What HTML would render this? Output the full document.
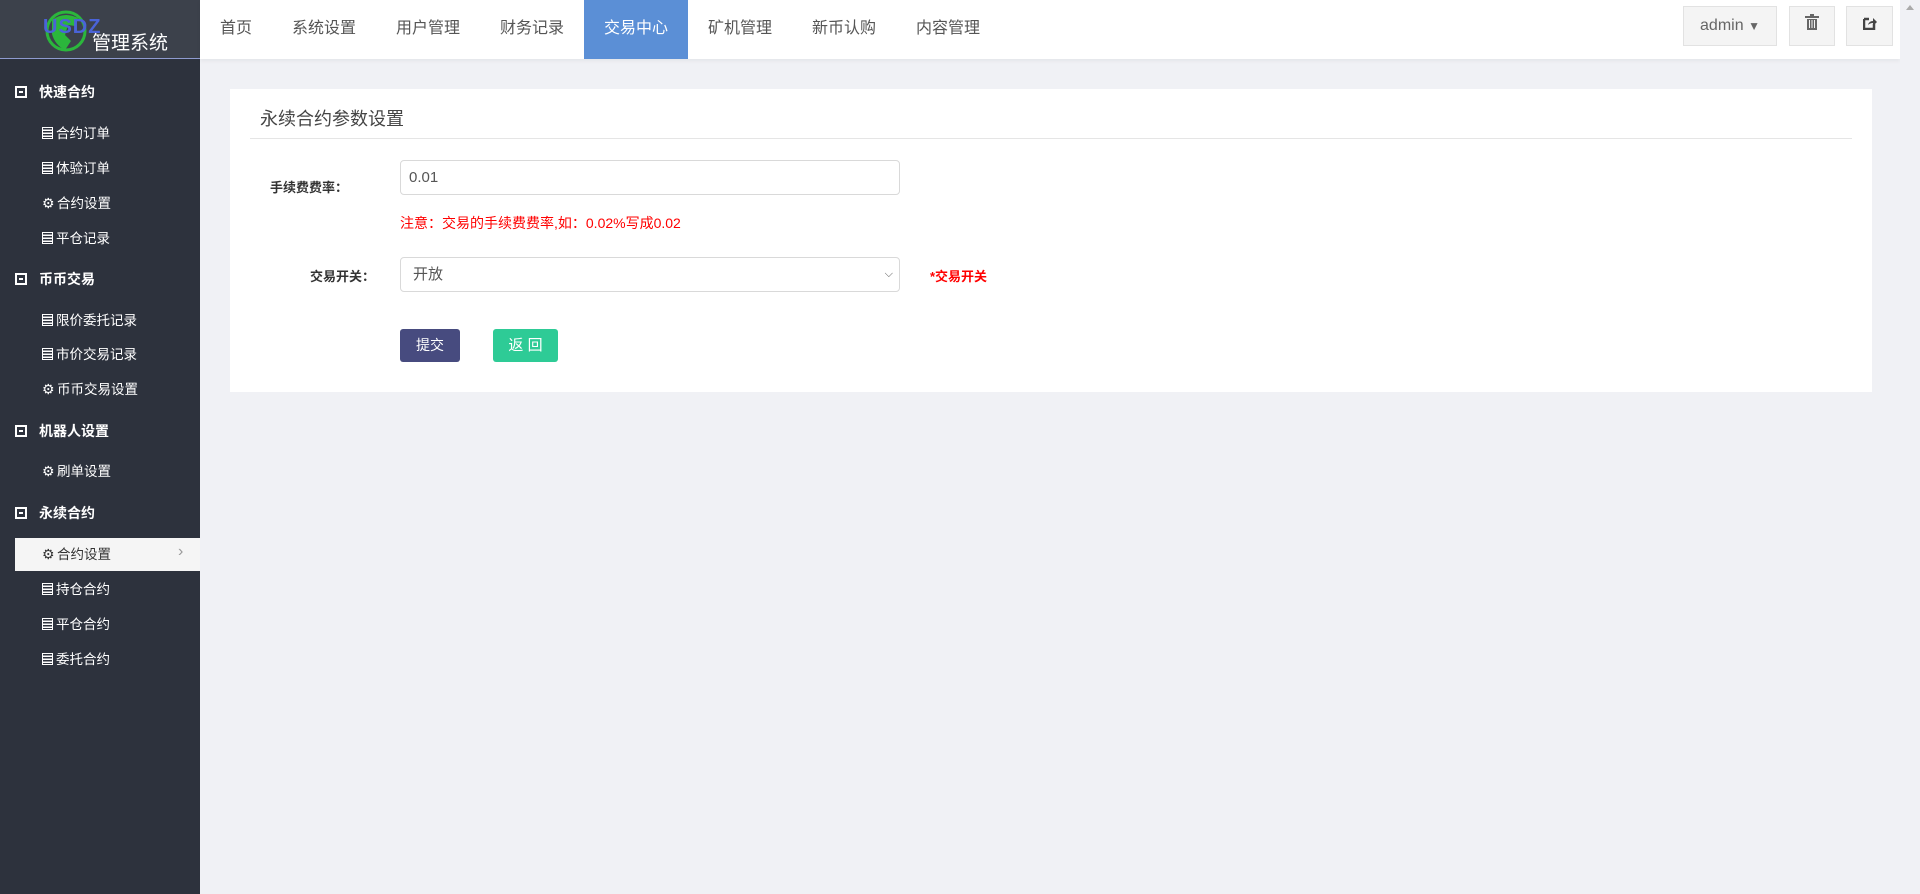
<!DOCTYPE html>
<html><head><meta charset="utf-8"><style>
*{margin:0;padding:0;box-sizing:border-box}
body{width:1920px;height:894px;overflow:hidden;background:#f0f1f5;font-family:"Liberation Sans","Noto Sans CJK SC",sans-serif;position:relative}
.side{position:absolute;left:0;top:0;width:200px;height:894px;background:#2d323d}
.logo{height:59px;background:#3c414b;border-bottom:1px solid #8f9bd0;position:relative}
.logo .t{position:absolute;left:92px;top:28px;color:#fff;font-size:19px}
.sec{position:absolute;left:15px;color:#fff;font-size:14px;font-weight:bold;line-height:20px}
.sec i{display:inline-block;width:12px;height:12px;border:2px solid #fff;position:relative;vertical-align:-1px;margin-right:12px}
.sec i:after{content:"";position:absolute;left:2px;top:3px;width:4px;height:2px;background:#fff}
.it{position:absolute;left:42px;color:#fff;font-size:13.5px;line-height:20px;top:1px}
.ic{display:inline-block;width:11px;height:12px;border:1.5px solid #fff;margin-right:3px;vertical-align:-1px;background:repeating-linear-gradient(#2d323d 0 1.5px,#fff 1.5px 3px)}
.gear{display:inline-block;width:14px;font-size:14px;margin-right:1px}
.act{position:absolute;left:15px;top:538px;width:185px;height:33px;background:#f5f5f5}
.top{position:absolute;left:200px;top:0;width:1700px;height:59px;background:#fff;box-shadow:0 2px 4px rgba(0,0,0,.05)}
.nav{position:absolute;top:0;height:59px;line-height:58px;font-size:16px;color:#555}
.tab{background:#5b8fd6;color:#fff;text-align:center}
.btn{position:absolute;top:6px;height:40px;background:#f4f4f4;border:1px solid #e2e2e2;text-align:center;line-height:38px;color:#666;font-size:16px}
.scroll{position:absolute;right:0;top:0;width:20px;height:894px;background:#f0f1f5}
.card{position:absolute;left:230px;top:89px;width:1642px;height:303px;background:#fff}
.lbl{position:absolute;font-size:13px;color:#333;font-weight:bold}
.inp{position:absolute;left:400px;width:500px;height:35px;border:1px solid #d9d9d9;border-radius:4px;font-size:15px;color:#555;padding-left:8px;line-height:33px}
</style></head><body>
<div class="side">
<div class="logo">
<svg style="position:absolute;left:44px;top:8px" width="44" height="46" viewBox="0 0 44 46"><circle cx="22" cy="23" r="19" fill="none" stroke="#2bb63c" stroke-width="3"/><path d="M8 12 Q20 3 34 10 L31 18 L24 17 L21 27 L27 33 L21 42 Q11 37 8 26Z" fill="#2bb63c"/></svg>
<span style="position:absolute;left:43px;top:16px;color:#4a63d8;font-size:20px;font-weight:bold;letter-spacing:1px">USDZ</span>
<span class="t">管理系统</span></div>
<div class="sec" style="top:82px"><i></i>快速合约</div>
<div class="it" style="top:124px"><span class="ic"></span>合约订单</div>
<div class="it" style="top:159px"><span class="ic"></span>体验订单</div>
<div class="it" style="top:193px"><span class="gear">⚙</span>合约设置</div>
<div class="it" style="top:229px"><span class="ic"></span>平仓记录</div>
<div class="sec" style="top:269px"><i></i>币币交易</div>
<div class="it" style="top:311px"><span class="ic"></span>限价委托记录</div>
<div class="it" style="top:345px"><span class="ic"></span>市价交易记录</div>
<div class="it" style="top:379px"><span class="gear">⚙</span>币币交易设置</div>
<div class="sec" style="top:421px"><i></i>机器人设置</div>
<div class="it" style="top:461px"><span class="gear">⚙</span>刷单设置</div>
<div class="sec" style="top:503px"><i></i>永续合约</div>
<div class="act"></div>
<div class="it" style="top:544px;color:#333"><span class="gear">⚙</span>合约设置</div>
<div style="position:absolute;left:178px;top:543px;color:#999;font-size:16px">›</div>
<div class="it" style="top:580px"><span class="ic"></span>持仓合约</div>
<div class="it" style="top:615px"><span class="ic"></span>平仓合约</div>
<div class="it" style="top:650px"><span class="ic"></span>委托合约</div>
</div>
<div class="top">
<div class="nav" style="left:20px">首页</div>
<div class="nav" style="left:92px">系统设置</div>
<div class="nav" style="left:196px">用户管理</div>
<div class="nav" style="left:300px">财务记录</div>
<div class="nav tab" style="left:384px;width:104px">交易中心</div>
<div class="nav" style="left:508px">矿机管理</div>
<div class="nav" style="left:612px">新币认购</div>
<div class="nav" style="left:716px">内容管理</div>
<div class="btn" style="left:1483px;width:94px">admin <span style="font-size:12px">▼</span></div>
<div class="btn" style="left:1589px;width:46px"><svg width="14" height="16" viewBox="0 0 14 16"><rect x="0" y="2" width="14" height="2" fill="#666"/><rect x="5" y="0" width="4" height="2" fill="#666"/><path d="M2 5h10v11H2z" fill="#666"/><path d="M4.5 6v8M7 6v8M9.5 6v8" stroke="#f4f4f4"/></svg></div>
<div class="btn" style="left:1646px;width:47px"><svg width="14" height="14" viewBox="0 0 14 14"><path d="M1 3h5M1 3v10h10V8" stroke="#444" stroke-width="2.5" fill="none"/><path d="M5 9Q6 5 10 5V2l4 4-4 4V7Q7 7 5 9Z" fill="#444"/></svg></div>
</div>
<div class="scroll"><div style="position:absolute;left:6px;top:5px;border:4px solid transparent;border-bottom:5px solid #aaa;border-top:0"></div></div>
<div class="card">
<div style="position:absolute;left:30px;top:16px;font-size:18px;color:#444">永续合约参数设置</div>
<div style="position:absolute;left:20px;right:20px;top:49px;height:1px;background:#e5e5e5"></div>
</div>
<div class="lbl" style="left:270px;top:177px">手续费费率：</div>
<div class="inp" style="top:160px">0.01</div>
<div style="position:absolute;left:400px;top:213px;font-size:14px;color:#f00">注意：交易的手续费费率,如：0.02%写成0.02</div>
<div class="lbl" style="left:310px;top:266px">交易开关：</div>
<div class="inp" style="top:257px;padding-left:12px">开放<span style="position:absolute;right:6px;font-size:11px;color:#555">⌵</span></div>
<div style="position:absolute;left:930px;top:266px;font-size:13px;color:#f00;font-weight:bold">*交易开关</div>
<div style="position:absolute;left:400px;top:329px;width:60px;height:33px;background:#474b7f;border-radius:3px;color:#fff;font-size:14px;text-align:center;line-height:33px">提交</div>
<div style="position:absolute;left:493px;top:329px;width:65px;height:33px;background:#2ecb96;border-radius:3px;color:#fff;font-size:15px;text-align:center;line-height:33px">返 回</div>
</body></html>
